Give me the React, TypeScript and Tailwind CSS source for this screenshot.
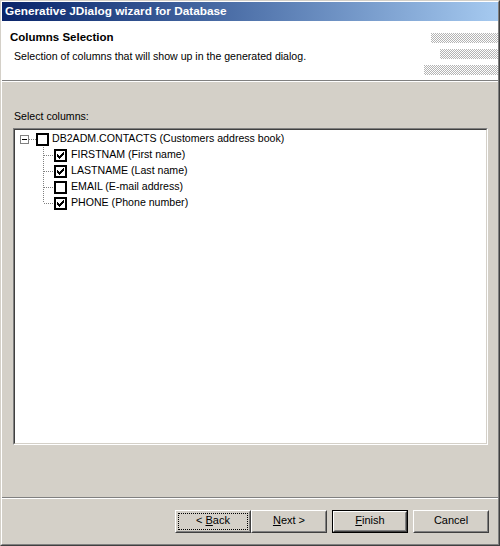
import React from "react";

const face = "bg-[#d4d0c8]";

const Hatch = ({ w }: { w: number }) => (
    <svg width={w} height="10" className="block">
        <defs>
            <pattern id={`h${w}`} width="2" height="2" patternUnits="userSpaceOnUse">
                <rect width="2" height="2" fill="#ffffff" />
                <rect width="1" height="1" fill="#b4b4b4" />
                <rect x="1" y="1" width="1" height="1" fill="#b4b4b4" />
            </pattern>
        </defs>
        <rect width={w} height="10" fill={`url(#h${w})`} />
    </svg>
);

const CheckBox = ({ checked }: { checked?: boolean }) => (
    <div className="w-[13px] h-[13px] shrink-0 border-2 border-black bg-white flex items-center justify-center">
        {checked && (
            <svg width="7" height="7" viewBox="0 0 7 7" shapeRendering="crispEdges" className="block">
                <path
                    fill="#000"
                    d="M6 0h1v1h-1z M5 1h2v1h-2z M0 2h1v1h-1z M4 2h3v1h-3z M0 3h2v1h-2z M3 3h3v1h-3z M0 4h5v1h-5z M1 5h3v1h-3z M2 6h1v1h-1z"
                />
            </svg>
        )}
    </div>
);

const Connector = ({ last }: { last?: boolean }) => (
    <svg width="11" height="16" className="block shrink-0">
        <line x1="0.5" y1="0" x2="0.5" y2={last ? 8 : 16} stroke="#808080" strokeDasharray="1 1" />
        <line x1="1" y1="8.5" x2="11" y2="8.5" stroke="#808080" strokeDasharray="1 1" />
    </svg>
);

const Button = ({ children, isDefault, focused }: { children: React.ReactNode; isDefault?: boolean; focused?: boolean }) => (
    <div className={`w-[76px] h-[23px] ${isDefault ? "border border-black" : ""}`}>
        <div className={`w-full h-full ${face} border border-t-white border-l-white border-b-[#404040] border-r-[#404040]`}>
            <div className="w-full h-full border border-t-[#d4d0c8] border-l-[#d4d0c8] border-b-[#808080] border-r-[#808080] p-[1px]">
                <div className={`w-full h-full flex items-center justify-center pb-[2px] border border-dotted ${focused ? "border-black" : "border-transparent"}`}>
                    {children}
                </div>
            </div>
        </div>
    </div>
);

const columns = [
    { label: "FIRSTNAM (First name)", checked: true },
    { label: "LASTNAME (Last name)", checked: true },
    { label: "EMAIL (E-mail address)", checked: false },
    { label: "PHONE (Phone number)", checked: true },
];

export default function App() {
    return (
        <div className="w-[500px] h-[546px] font-['Liberation_Sans',Arial,sans-serif] text-[10.6px] text-black border border-t-[#d4d0c8] border-l-[#d4d0c8] border-b-[#404040] border-r-[#404040]">
            <div className={`w-full h-full flex flex-col ${face} border border-t-white border-l-white border-b-[#808080] border-r-[#808080]`}>
                {/* title bar */}
                <div className="h-[19px] shrink-0 flex items-center pl-[3px] bg-gradient-to-r from-[#0a246a] to-[#a6caf0] text-white font-bold text-[11.8px]">
                    Generative JDialog wizard for Database
                </div>

                {/* header */}
                <div className="h-[59px] shrink-0 bg-white flex justify-between">
                    <div className="flex flex-col pl-[8px] pt-[9px]">
                        <div className="font-bold h-[14px] leading-[14px] text-[11.5px]">Columns Selection</div>
                        <div className="pl-[4px] mt-[5px] leading-[14px]">Selection of columns that will show up in the generated dialog.</div>
                    </div>
                    <div className="flex flex-col items-end gap-[6px] pt-[12px]">
                        <Hatch w={67} />
                        <Hatch w={58} />
                        <Hatch w={74} />
                    </div>
                </div>
                <div className="h-[2px] shrink-0 border-t border-t-[#808080] border-b border-b-white" />

                {/* body */}
                <div className="flex-1 flex flex-col px-[11px] pt-[28px]">
                    <div className="h-[13px] leading-[13px] pl-[1px]">Select columns:</div>
                    <div className="mt-[5px] h-[317px] w-[475px] border border-t-[#808080] border-l-[#808080] border-b-white border-r-white">
                        <div className="w-full h-full bg-white border border-t-[#404040] border-l-[#404040] border-b-[#d4d0c8] border-r-[#d4d0c8] pt-[1px]">
                            <div className="h-[16px] flex items-center pl-[5px]">
                                <div className="w-[9px] h-[9px] border border-[#808080] bg-white flex items-center justify-center shrink-0">
                                    <div className="w-[5px] h-[1px] bg-black" />
                                </div>
                                <svg width="7" height="16" className="block shrink-0">
                                    <line x1="0" y1="8.5" x2="7" y2="8.5" stroke="#808080" strokeDasharray="1 1" />
                                </svg>
                                <CheckBox />
                                <span className="ml-[3px] whitespace-nowrap">DB2ADM.CONTACTS (Customers address book)</span>
                            </div>
                            {columns.map((c, i) => (
                                <div key={c.label} className="h-[16px] flex items-center pl-[28px]">
                                    <Connector last={i === columns.length - 1} />
                                    <CheckBox checked={c.checked} />
                                    <span className="ml-[4px] whitespace-nowrap">{c.label}</span>
                                </div>
                            ))}
                        </div>
                    </div>
                    <div className="flex-1" />
                </div>

                <div className="h-[2px] shrink-0 border-t border-t-[#808080] border-b border-b-white" />

                {/* buttons */}
                <div className="h-[45px] shrink-0 flex items-start justify-end pt-[11px] pr-[9px] text-[11px]">
                    <Button focused>
                        &lt; <span className="underline ml-[3px]">B</span>ack
                    </Button>
                    <Button>
                        <span className="underline">N</span>ext &gt;
                    </Button>
                    <div className="w-[5px]" />
                    <Button isDefault>
                        <span className="underline">F</span>inish
                    </Button>
                    <div className="w-[5px]" />
                    <Button>Cancel</Button>
                </div>
            </div>
        </div>
    );
}
